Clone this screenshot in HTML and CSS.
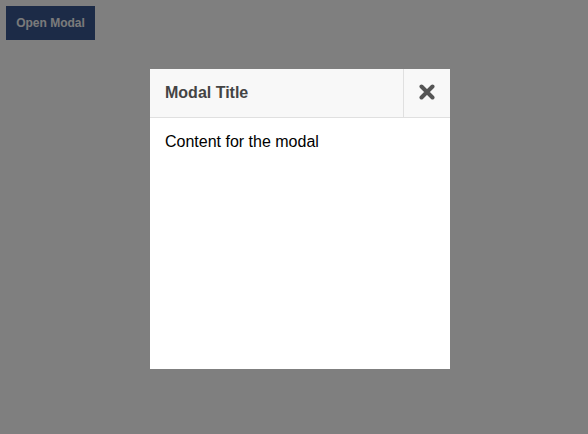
FILE: index.html
```html
<!DOCTYPE html>
<html>
<head>
<meta charset="utf-8">
<link rel="stylesheet" href="styles.css">
</head>
<body>
<button class="open-btn">Open Modal</button>
<div class="overlay">
  <div class="modal">
    <div class="modal-header">
      <div class="modal-title">Modal Title</div>
      <button class="close-btn" aria-label="Close">
        <svg width="16" height="16" viewBox="0 0 16 16"><path d="M2.5 2.5 L13.5 13.5 M13.5 2.5 L2.5 13.5" stroke="#555" stroke-width="4" stroke-linecap="round" fill="none"/></svg>
      </button>
    </div>
    <div class="modal-body">Content for the modal</div>
  </div>
</div>
</body>
</html>
```
FILE: styles.css
```css
html, body {
  margin: 0;
  height: 100%;
}
body {
  background: #ffffff;
  padding: 6px;
  box-sizing: border-box;
  font-family: "Liberation Sans", Arial, sans-serif;
}
.open-btn {
  display: block;
  width: 89px;
  height: 34px;
  padding: 0 10px;
  border: none;
  background: #38568f;
  color: #f5f5f5;
  font-family: "Liberation Sans", Arial, sans-serif;
  font-weight: bold;
  font-size: 12px;
}
.overlay {
  position: fixed;
  inset: 0;
  background: rgba(0, 0, 0, 0.5);
}
.modal {
  position: absolute;
  left: 150px;
  top: 69px;
  width: 300px;
  height: 300px;
  background: #ffffff;
  display: flex;
  flex-direction: column;
}
.modal-header {
  display: flex;
  height: 48px;
  background: #f8f8f8;
  border-bottom: 1px solid #e0e0e0;
}
.modal-title {
  flex: 1;
  display: flex;
  align-items: center;
  padding-left: 15px;
  font-weight: bold;
  font-size: 16px;
  color: #444444;
}
.close-btn {
  width: 47px;
  border: none;
  border-left: 1px solid #e0e0e0;
  background: transparent;
  padding: 0;
  display: flex;
  align-items: center;
  justify-content: center;
}
.close-btn svg {
  display: block;
  margin-top: -2px;
}
.modal-body {
  padding: 15px;
  font-size: 16px;
  color: #000000;
  line-height: 18px;
}
```
